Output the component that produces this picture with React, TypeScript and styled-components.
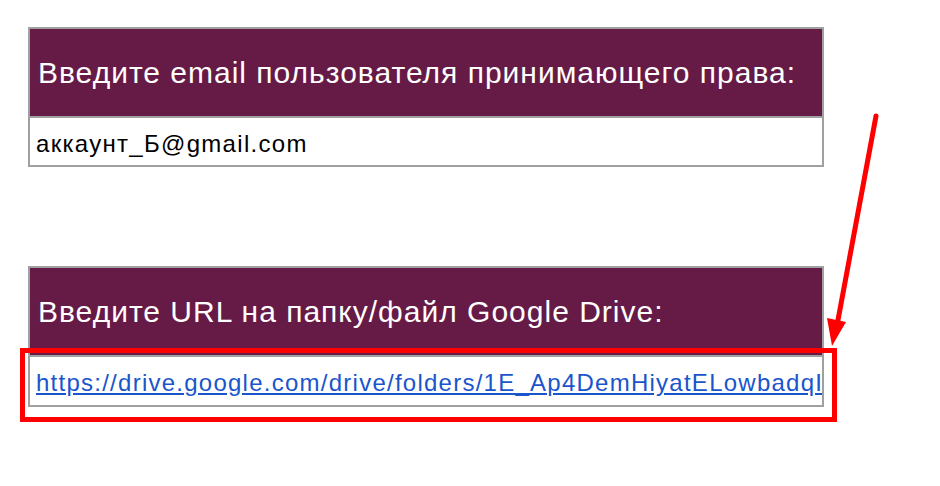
import styled, { createGlobalStyle } from 'styled-components';

const GlobalStyle = createGlobalStyle`
  html, body {
    margin: 0;
    padding: 0;
    background: #ffffff;
  }
  body {
    font-family: "Liberation Sans", Arial, sans-serif;
  }
`;

const Page = styled.div`
  position: relative;
  width: 940px;
  height: 486px;
  padding: 27px 0 0 28px;
  box-sizing: border-box;
  display: flex;
  flex-direction: column;
  gap: 99px;
  overflow: hidden;
`;

const Panel = styled.div`
  width: 796px;
  box-sizing: border-box;
  border: 2px solid #a0a0a0;
  display: flex;
  flex-direction: column;
`;

const PanelHeader = styled.div`
  height: 87px;
  background: #661a46;
  color: #ffffff;
  font-size: 30px;
  letter-spacing: 1px;
  display: flex;
  align-items: center;
  padding-left: 8px;
  white-space: nowrap;
`;

const PanelCell = styled.div<{ $height: number }>`
  position: relative;
  height: ${({ $height }) => $height}px;
  border-top: 2px solid #a0a0a0;
  display: flex;
  align-items: center;
  padding-left: 6px;
  padding-top: 4px;
  box-sizing: border-box;
  font-size: 24px;
  letter-spacing: 1.3px;
  color: #000000;
  white-space: nowrap;
  overflow: hidden;
`;

const Highlight = styled.div`
  position: relative;

  &::after {
    content: '';
    position: absolute;
    left: -10px;
    right: -15px;
    top: -7px;
    bottom: -17px;
    border: 5px solid #ff0000;
    pointer-events: none;
  }
`;

const Link = styled.a`
  color: #1a55cc;
  text-decoration: underline;
  letter-spacing: 1.25px;
`;

const Arrow = styled.svg`
  position: absolute;
  left: 0;
  top: 0;
  pointer-events: none;
`;

const App = () => {
  return (
    <>
      <GlobalStyle />
      <Page>
        <Panel>
          <PanelHeader>Введите email пользователя принимающего права:</PanelHeader>
          <PanelCell $height={49}>аккаунт_Б@gmail.com</PanelCell>
        </Panel>
        <Panel>
          <PanelHeader>Введите URL на папку/файл Google Drive:</PanelHeader>
          <Highlight>
            <PanelCell $height={50}>
              <Link href="#">
                https://drive.google.com/drive/folders/1E_Ap4DemHiyatELowbadqI
              </Link>
            </PanelCell>
          </Highlight>
        </Panel>
        <Arrow width="940" height="486" viewBox="0 0 940 486">
          <line x1="876" y1="116" x2="838" y2="320" stroke="#ff0000" strokeWidth="5" strokeLinecap="round" />
          <polygon points="827,318 846,322 832,346" fill="#ff0000" />
        </Arrow>
      </Page>
    </>
  );
};

export default App;
